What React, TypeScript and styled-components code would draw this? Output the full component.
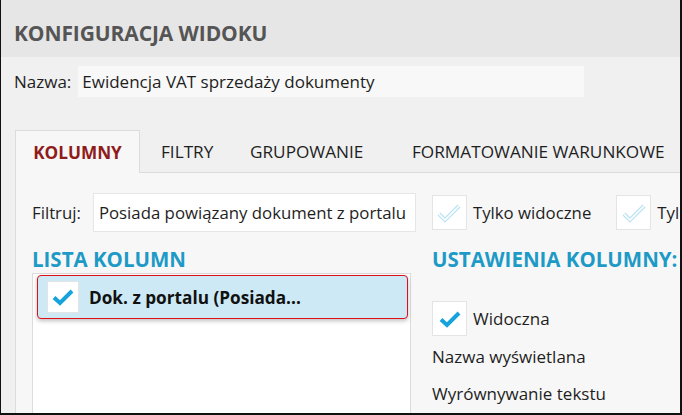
import React from "react";
import styled, { createGlobalStyle } from "styled-components";

const Global = createGlobalStyle`
  html, body { margin: 0; padding: 0; }
  body { width: 682px; height: 415px; overflow: hidden; background: #000; font-family: "Open Sans", "Noto Sans", sans-serif; }
`;

const Frame = styled.div`
  box-sizing: border-box;
  width: 682px;
  height: 415px;
  padding: 0 2px 2px 1px;
  background: #111;
`;

const Window = styled.div`
  width: 100%;
  height: 100%;
  background: #f0f0f0;
  display: flex;
  flex-direction: column;
  overflow: hidden;
`;

const Header = styled.div`
  height: 57px;
  flex: none;
  background: #e6e6e6;
  display: flex;
  align-items: center;
  padding-left: 13px;
  padding-top: 8px;
  box-sizing: border-box;
  font-weight: 700;
  font-size: 21px;
  color: #555;
  letter-spacing: -0.1px;
`;

const NameRow = styled.div`
  display: flex;
  align-items: center;
  padding: 9px 0 0 13px;
  gap: 7px;
  font-size: 17px;
  color: #1e1e1e;
`;

const NameInput = styled.div`
  width: 506px;
  height: 31px;
  background: #f8f8f8;
  display: flex;
  align-items: center;
  padding-left: 4px;
  box-sizing: border-box;
`;

const TabStrip = styled.div`
  display: flex;
  margin: 33px 0 0 14px;
  height: 42px;
  align-items: stretch;
`;

const Tab = styled.div<{ $active?: boolean; $w: number }>`
  width: ${(p) => p.$w}px;
  flex: none;
  box-sizing: border-box;
  display: flex;
  align-items: center;
  justify-content: ${(p) => (p.$active ? "center" : "flex-start")};
  padding-left: ${(p) => (p.$active ? 0 : 20)}px;
  font-size: 17.2px;
  font-weight: ${(p) => (p.$active ? 700 : 400)};
  color: ${(p) => (p.$active ? "#8f1b1b" : "#1e1e1e")};
  background: ${(p) => (p.$active ? "#f7f7f7" : "transparent")};
  border: 1px solid ${(p) => (p.$active ? "#dcdcdc" : "transparent")};
  border-bottom: none;
  white-space: nowrap;
  position: relative;
  z-index: 1;
  margin-bottom: ${(p) => (p.$active ? -1 : 0)}px;
`;

const Panel = styled.div`
  flex: 1;
  margin-left: 14px;
  background: #f7f7f7;
  border-left: 1px solid #dcdcdc;
  border-top: 1px solid #dcdcdc;
  padding: 20px 0 0 16px;
  display: flex;
  flex-direction: column;
`;

const FilterRow = styled.div`
  display: flex;
  align-items: center;
  font-size: 16.8px;
  color: #1e1e1e;
`;

const FilterInput = styled.div`
  margin-left: 12px;
  width: 323px;
  flex: none;
  height: 39px;
  box-sizing: border-box;
  background: #fff;
  border: 1px solid #e6e6e6;
  display: flex;
  align-items: center;
  padding-left: 5px;
  white-space: nowrap;
  overflow: hidden;
`;

const Box = styled.div<{ $size: number; $bg?: string }>`
  width: ${(p) => p.$size}px;
  height: ${(p) => p.$size}px;
  box-sizing: border-box;
  background: ${(p) => p.$bg || "#fff"};
  border: 1px solid #e4e4e4;
  display: flex;
  align-items: center;
  justify-content: center;
  flex: none;
`;

const CheckLabel = styled.span`
  margin-left: 6px;
  white-space: nowrap;
`;

const Columns = styled.div`
  display: flex;
  flex: 1;
  margin-top: 15px;
`;

const LeftCol = styled.div`
  width: 379px;
  flex: none;
  display: flex;
  flex-direction: column;
`;

const RightCol = styled.div`
  margin-left: 21px;
  display: flex;
  flex-direction: column;
  font-size: 17px;
  color: #1e1e1e;
`;

const SectionTitle = styled.div`
  font-size: 20.5px;
  font-weight: 700;
  color: #1e9ac6;
  height: 24px;
  line-height: 24px;
  white-space: nowrap;
`;

const ListBox = styled.div`
  flex: 1;
  margin-top: 2px;
  background: #fff;
  border: 1px solid #dcdcdc;
  border-bottom: none;
  padding: 1px 2px 0 4px;
`;

const SelectedItem = styled.div`
  height: 44px;
  box-sizing: border-box;
  background: #cde9f5;
  border: 1.5px solid #e0101a;
  border-radius: 4px;
  box-shadow: 0 2px 4px rgba(0, 0, 0, 0.25);
  display: flex;
  align-items: center;
  padding-left: 9px;
  font-weight: 700;
  font-size: 17.2px;
  color: #111;
`;

const ItemLabel = styled.span`
  margin-left: 10px;
`;

const SettingRow = styled.div<{ $mt: number }>`
  display: flex;
  align-items: center;
  margin-top: ${(p) => p.$mt}px;
  white-space: nowrap;
`;

const FadedCheck = () => (
  <svg width="24" height="20" viewBox="0 0 24 20">
    <path
      d="M2 11 L8 17 L22 3"
      fill="none"
      stroke="#b9e2f3"
      strokeWidth="4"
      strokeLinejoin="miter"
    />
    <path d="M2 11 L8 17 L22 3" fill="none" stroke="#fff" strokeWidth="1.6" />
  </svg>
);

const SolidCheck = () => (
  <svg width="22" height="18" viewBox="0 0 22 18">
    <path d="M2 9.5 L8 15 L20 3" fill="none" stroke="#16a3dc" strokeWidth="4" />
  </svg>
);

export default function App() {
  return (
    <>
      <Global />
      <Frame>
        <Window>
          <Header>KONFIGURACJA WIDOKU</Header>
          <NameRow>
            <span>Nazwa:</span>
            <NameInput>Ewidencja VAT sprzedaży dokumenty</NameInput>
          </NameRow>
          <TabStrip>
            <Tab $active $w={125}>KOLUMNY</Tab>
            <Tab $w={89}>FILTRY</Tab>
            <Tab $w={162}>GRUPOWANIE</Tab>
            <Tab $w={260}>FORMATOWANIE WARUNKOWE</Tab>
          </TabStrip>
          <Panel>
            <FilterRow>
              <span>Filtruj:</span>
              <FilterInput>Posiada powiązany dokument z portalu</FilterInput>
              <Box $size={35} style={{ marginLeft: 16 }}>
                <FadedCheck />
              </Box>
              <CheckLabel>Tylko widoczne</CheckLabel>
              <Box $size={35} style={{ marginLeft: 25 }}>
                <FadedCheck />
              </Box>
              <CheckLabel>Tylko zaznaczone</CheckLabel>
            </FilterRow>
            <Columns>
              <LeftCol>
                <SectionTitle>LISTA KOLUMN</SectionTitle>
                <ListBox>
                  <SelectedItem>
                    <Box $size={32}>
                      <SolidCheck />
                    </Box>
                    <ItemLabel>Dok. z portalu (Posiada...</ItemLabel>
                  </SelectedItem>
                </ListBox>
              </LeftCol>
              <RightCol>
                <SectionTitle>USTAWIENIA KOLUMNY:</SectionTitle>
                <SettingRow $mt={30}>
                  <Box $size={35}>
                    <SolidCheck />
                  </Box>
                  <CheckLabel>Widoczna</CheckLabel>
                </SettingRow>
                <SettingRow $mt={9}>Nazwa wyświetlana</SettingRow>
                <SettingRow $mt={14}>Wyrównywanie tekstu</SettingRow>
              </RightCol>
            </Columns>
          </Panel>
        </Window>
      </Frame>
    </>
  );
}
